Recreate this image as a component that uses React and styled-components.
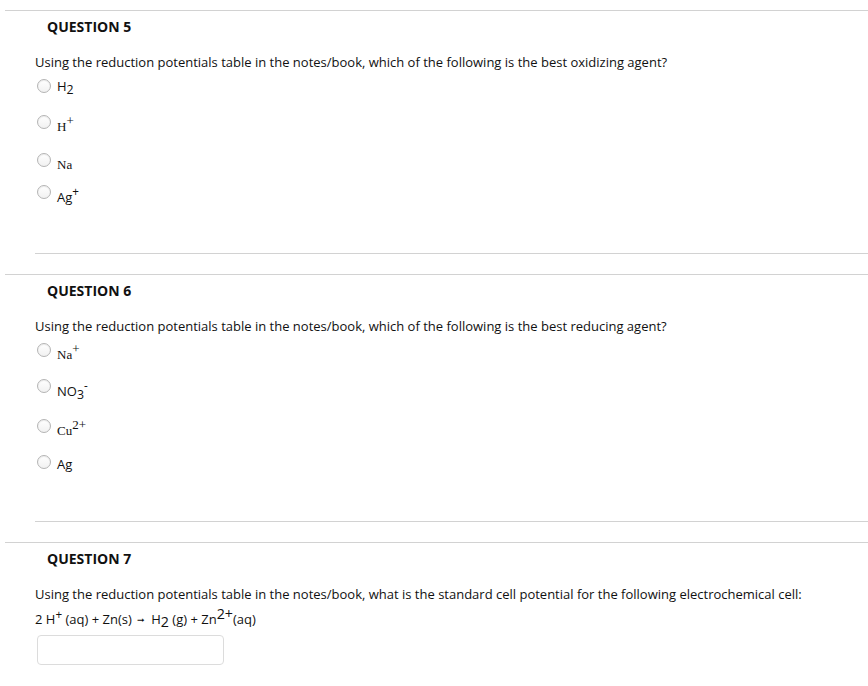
import React from "react";
import styled, { createGlobalStyle } from "styled-components";

const GlobalStyle = createGlobalStyle`
  html, body {
    margin: 0;
    padding: 0;
    background: #ffffff;
  }
  body {
    font-family: "Open Sans", "Liberation Sans", sans-serif;
    color: #111;
    overflow: hidden;
  }
`;

const Page = styled.div`
  padding: 10px 0 0 5px;
  width: 863px;
`;

const Section = styled.section`
  border-top: 1px solid #d2d2d2;
  padding-top: 6px;
`;

const Heading = styled.h3`
  margin: 0 0 0 42px;
  font-size: 14px;
  line-height: 19px;
  font-weight: 700;
  color: #111;
`;

const Body = styled.div`
  padding: 16px 0 0 30px;
`;

const Prompt = styled.p`
  margin: 0;
  font-size: 13px;
  line-height: 20px;
  color: #111;
`;

const Options = styled.ul`
  list-style: none;
  margin: 0;
  padding: 6px 0 0 2px;
  display: flex;
  flex-direction: column;
  gap: 15px;
`;

const Option = styled.li`
  display: flex;
  align-items: flex-start;
  gap: 6px;
  min-height: 21px;
  margin-top: ${(p) => p.$space || 0}px;
`;

const Radio = styled.span`
  flex: none;
  width: 12px;
  height: 12px;
  margin-top: 1px;
  border-radius: 50%;
  border: 1px solid #b4b4b4;
  background: linear-gradient(#ffffff, #f1f1f1);
  box-shadow: inset 0 1px 1px rgba(0, 0, 0, 0.08);
`;

const Label = styled.span`
  font-family: ${(p) =>
    p.$serif
      ? '"Liberation Serif", "Times New Roman", serif'
      : '"Open Sans", "Liberation Sans", sans-serif'};
  font-size: 13px;
  line-height: 16px;
  padding-top: ${(p) => p.$drop || 0}px;
  color: #111;

  sup {
    font-size: ${(p) => (p.$serif ? "1em" : "0.9em")};
    line-height: 0;
    vertical-align: 6px;
  }
  sub {
    font-size: 0.95em;
    line-height: 0;
    vertical-align: -3px;
  }
`;

const Divider = styled.hr`
  border: 0;
  border-top: 1px solid #d2d2d2;
  margin: ${(p) => p.$gap}px 0 20px 30px;
`;

const Equation = styled.p`
  margin: 4px 0 0;
  font-size: 13px;
  line-height: 22px;
  color: #111;

  sup {
    font-size: 0.9em;
    line-height: 0;
    vertical-align: 5px;
  }
  sup.big {
    font-size: 1.1em;
  }
  sub {
    font-size: 1.1em;
    line-height: 0;
    vertical-align: -3px;
  }
`;

const Arrow = styled.span`
  display: inline-block;
  font-size: 9px;
  margin: 0 6px 0 2px;
  vertical-align: 1px;
`;

const AnswerInput = styled.input`
  display: block;
  margin: 4px 0 0 2px;
  width: 187px;
  height: 30px;
  box-sizing: border-box;
  border: 1px solid #dcdcdc;
  border-radius: 4px;
  background: #fff;
  outline: none;
`;

const questions = [
  {
    num: 5,
    prompt:
      "Using the reduction potentials table in the notes/book, which of the following is the best oxidizing agent?",
    gap: 48,
    options: [
      { key: "h2", label: <>H<sub>2</sub></> },
      { key: "hp", serif: true, drop: 5, label: <>H<sup>+</sup></> },
      { key: "na", serif: true, drop: 5, space: 2, label: <>Na</> },
      { key: "ag", drop: 5, space: -4, label: <>Ag<sup>+</sup></> },
    ],
  },
  {
    num: 6,
    prompt:
      "Using the reduction potentials table in the notes/book, which of the following is the best reducing agent?",
    gap: 46,
    options: [
      { key: "nap", serif: true, drop: 5, label: <>Na<sup>+</sup></> },
      { key: "no3", drop: 5, label: <>NO<sub>3</sub><sup>-</sup></> },
      { key: "cu", serif: true, drop: 5, space: 4, label: <>Cu<sup>2+</sup></> },
      { key: "agm", drop: 2, label: <>Ag</> },
    ],
  },
];

function Question({ num, prompt, options, gap }) {
  return (
    <Section>
      <Heading>QUESTION {num}</Heading>
      <Body>
        <Prompt>{prompt}</Prompt>
        <Options>
          {options.map((o) => (
            <Option key={o.key} $space={o.space}>
              <Radio />
              <Label $serif={o.serif} $drop={o.drop}>
                {o.label}
              </Label>
            </Option>
          ))}
        </Options>
      </Body>
      <Divider $gap={gap} />
    </Section>
  );
}

export default function App() {
  return (
    <Page>
      <GlobalStyle />
      {questions.map((q) => (
        <Question key={q.num} {...q} />
      ))}
      <Section>
        <Heading>QUESTION 7</Heading>
        <Body>
          <Prompt>
            Using the reduction potentials table in the notes/book, what is the
            standard cell potential for the following electrochemical cell:
          </Prompt>
          <Equation>
            2 H<sup>+</sup> (aq) + Zn(s) <Arrow>➞</Arrow>H<sub>2</sub> (g) +
            Zn<sup className="big">2+</sup>(aq)
          </Equation>
          <AnswerInput type="text" />
        </Body>
      </Section>
    </Page>
  );
}
